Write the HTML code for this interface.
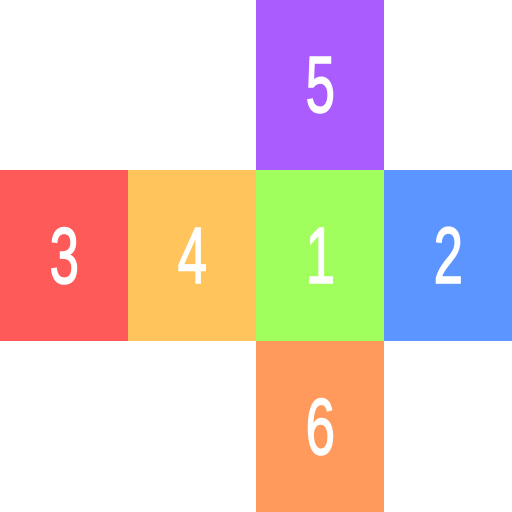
<!DOCTYPE html>
<html><head><style>
body{margin:0;width:512px;height:512px;background:#fff;position:relative;overflow:hidden}
.s{position:absolute;width:128px;display:flex;align-items:center;justify-content:center;color:#fff;font-family:"Liberation Sans",sans-serif;font-size:80px;-webkit-text-stroke:1.6px #fff}
.s span{display:inline-block;transform:scaleX(0.66)}
</style></head><body>
<div class="s" style="left:256px;top:0;height:170px;background:#aa5cff"><span>5</span></div>
<div class="s" style="left:0;top:170px;height:171px;background:#ff5a5a"><span>3</span></div>
<div class="s" style="left:128px;top:170px;height:171px;background:#ffc55c"><span>4</span></div>
<div class="s" style="left:256px;top:170px;height:171px;background:#a0ff5c"><span>1</span></div>
<div class="s" style="left:384px;top:170px;height:171px;background:#5c95ff"><span>2</span></div>
<div class="s" style="left:256px;top:341px;height:171px;background:#ff9a5c"><span>6</span></div>
</body></html>
